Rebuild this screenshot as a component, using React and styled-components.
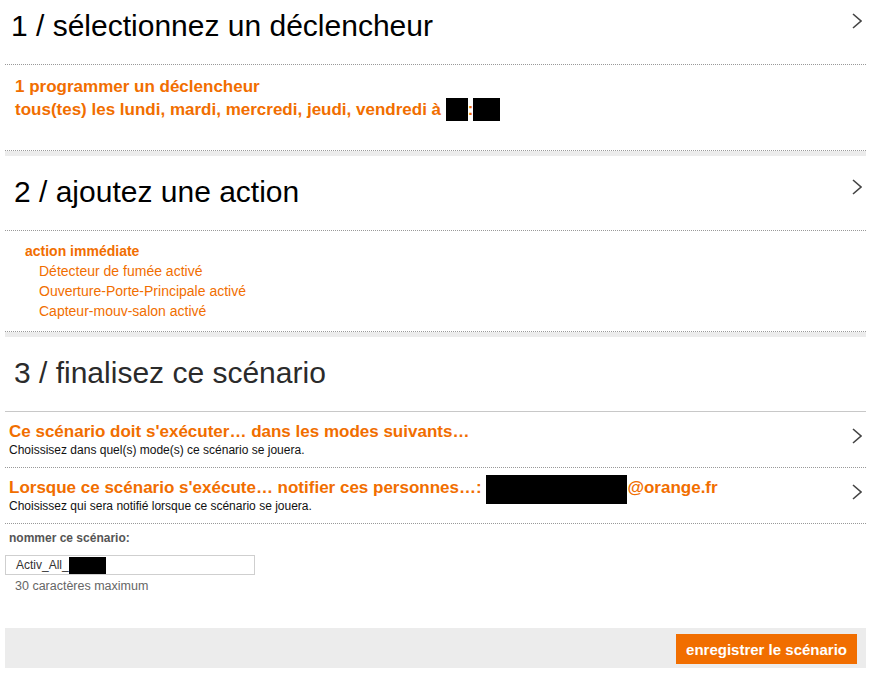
import React from "react";
import styled, { createGlobalStyle } from "styled-components";

const ORANGE = "#f16e00";

const GlobalStyle = createGlobalStyle`
  body {
    margin: 0;
    background: #fff;
    font-family: "Liberation Sans", Arial, sans-serif;
  }
`;

const Chevron = () => (
  <ChevronIcon width="10" height="16" viewBox="0 0 10 16">
    <polyline points="1,1 9,8 1,15" fill="none" stroke="#444" strokeWidth="1.6" />
  </ChevronIcon>
);

const App = () => {
  return (
    <Page>
      <GlobalStyle />

      <Section>
        <Header>
          <Title indent={6}>1 / sélectionnez un déclencheur</Title>
          <Chevron />
        </Header>
        <TriggerBody>
          <div>1 programmer un déclencheur</div>
          <div>
            tous(tes) les lundi, mardi, mercredi, jeudi, vendredi à{" "}
            <Redacted w={22} h={23} />:<Redacted w={27} h={23} />
          </div>
        </TriggerBody>
      </Section>
      <Band />

      <Section spaced>
        <Header>
          <Title indent={9}>2 / ajoutez une action</Title>
          <Chevron />
        </Header>
        <ActionList>
          <ActionHead>action immédiate</ActionHead>
          <ActionItem>Détecteur de fumée activé</ActionItem>
          <ActionItem>Ouverture-Porte-Principale activé</ActionItem>
          <ActionItem>Capteur-mouv-salon activé</ActionItem>
        </ActionList>
      </Section>
      <Band />

      <Section spaced>
        <Header solid>
          <Title indent={9} color="#2b2b2b">3 / finalisez ce scénario</Title>
        </Header>
        <Row>
          <RowText>
            <RowTitle>Ce scénario doit s'exécuter… dans les modes suivants…</RowTitle>
            <RowSub>Choissisez dans quel(s) mode(s) ce scénario se jouera.</RowSub>
          </RowText>
          <Chevron />
        </Row>
        <Row>
          <RowText>
            <RowTitle>
              Lorsque ce scénario s'exécute… notifier ces personnes…:{" "}
              <EmailBox />@orange.fr
            </RowTitle>
            <RowSub>Choisissez qui sera notifié lorsque ce scénario se jouera.</RowSub>
          </RowText>
          <Chevron />
        </Row>
        <NameBlock>
          <NameLabel>nommer ce scénario:</NameLabel>
          <NameField>
            Activ_All_<Redacted w={37} h={17} />
          </NameField>
          <Hint>30 caractères maximum</Hint>
        </NameBlock>
      </Section>

      <Footer>
        <SaveButton>enregistrer le scénario</SaveButton>
      </Footer>
    </Page>
  );
};

export default App;

const Page = styled.div`
  margin: 0 8px 0 5px;
  color: #000;
`;

const Section = styled.section`
  margin-top: ${p => (p.spaced ? "10px" : "0")};
`;

const Header = styled.div`
  display: flex;
  justify-content: space-between;
  align-items: flex-start;
  padding: 10px 4px 22px 0;
  border-bottom: 1px ${p => (p.solid ? "solid #c8c8c8" : "dotted #999")};
`;

const Title = styled.h2`
  margin: 0;
  padding-left: ${p => p.indent}px;
  font-size: 30px;
  font-weight: normal;
  line-height: 32px;
  color: ${p => p.color || "#000"};
`;

const ChevronIcon = styled.svg`
  display: block;
  flex: none;
  margin-top: 3px;
`;

const TriggerBody = styled.div`
  padding: 10px 10px 29px;
  border-bottom: 1px dotted #999;
  color: ${ORANGE};
  font-size: 17px;
  font-weight: bold;
  line-height: 23px;
`;

const Redacted = styled.span`
  display: inline-block;
  width: ${p => p.w}px;
  height: ${p => p.h}px;
  background: #000;
  vertical-align: -6px;
`;

const Band = styled.div`
  height: 5px;
  background: #ececec;
`;

const ActionList = styled.div`
  padding: 10px 20px 10px;
  border-bottom: 1px dotted #999;
  color: ${ORANGE};
  font-size: 14px;
  line-height: 20px;
`;

const ActionHead = styled.div`
  font-weight: bold;
`;

const ActionItem = styled.div`
  padding-left: 14px;
`;

const Row = styled.div`
  display: flex;
  justify-content: space-between;
  align-items: flex-start;
  padding: 10px 4px 9px;
  border-bottom: 1px dotted #999;

  ${ChevronIcon} {
    margin-top: 6px;
  }
`;

const RowText = styled.div`
  display: flex;
  flex-direction: column;
`;

const RowTitle = styled.div`
  color: ${ORANGE};
  font-size: 17px;
  font-weight: bold;
  line-height: 20px;
`;

const EmailBox = styled.span`
  display: inline-block;
  width: 141px;
  height: 29px;
  background: #000;
  vertical-align: top;
  margin: -3px 0 -6px;
`;

const RowSub = styled.div`
  font-size: 12px;
  line-height: 16px;
  color: #111;
`;

const NameBlock = styled.div`
  padding: 6px 0 34px;
`;

const NameLabel = styled.div`
  padding-left: 4px;
  font-size: 12px;
  font-weight: bold;
  line-height: 16px;
  color: #555;
  margin-bottom: 9px;
`;

const NameField = styled.div`
  display: flex;
  align-items: center;
  box-sizing: border-box;
  width: 250px;
  height: 20px;
  padding-left: 10px;
  border: 1px solid #cfcfcf;
  font-size: 12px;
  color: #333;
`;

const Hint = styled.div`
  margin-top: 3px;
  padding-left: 10px;
  font-size: 12.5px;
  line-height: 16px;
  color: #666;
`;

const Footer = styled.div`
  display: flex;
  justify-content: flex-end;
  padding: 6px 9px 4px;
  background: #ececec;
`;

const SaveButton = styled.button`
  height: 30px;
  padding: 0 10px;
  border: 0;
  background: ${ORANGE};
  color: #fff;
  font-family: "Liberation Sans", Arial, sans-serif;
  font-size: 15px;
  font-weight: bold;
  cursor: pointer;
`;
